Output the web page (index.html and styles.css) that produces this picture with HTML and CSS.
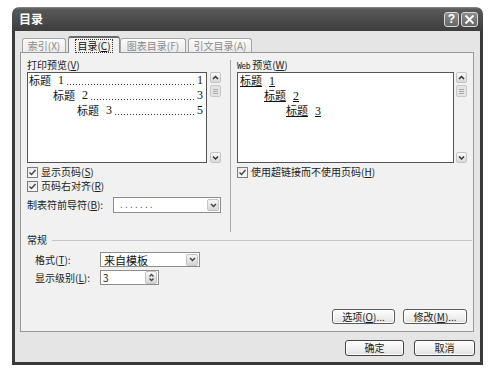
FILE: index.html
```html
<!DOCTYPE html>
<html lang="zh-CN">
<head>
<meta charset="utf-8">
<title>目录</title>
<link rel="stylesheet" href="styles.css">
</head>
<body>
<div class="win">
  <div class="titlebar">
    <span class="title">目录</span>
    <div class="tb-btns">
      <span class="tb-btn">?</span>
      <span class="tb-btn close"><svg width="11" height="11" viewBox="0 0 11 11"><path d="M1.5 1.5 L9.5 9.5 M9.5 1.5 L1.5 9.5" stroke="#fff" stroke-width="1.8" fill="none"/></svg></span>
    </div>
  </div>
  <div class="frame">
    <div class="tabs">
      <span class="tab t1">索引(X)</span>
      <span class="tab t2 sel"><span class="focus">目录(<u>C</u>)</span></span>
      <span class="tab t3">图表目录(F)</span>
      <span class="tab t4">引文目录(A)</span>
    </div>
    <div class="panel">
      <div class="top">
        <div class="col left">
          <div class="label">打印预览(<u>V</u>)</div>
          <div class="preview-wrap">
            <div class="preview">
              <div class="toc-line"><span class="h">标题</span><span class="n">1</span><span class="lead"></span><span class="pg">1</span></div>
              <div class="toc-line i1"><span class="h">标题</span><span class="n">2</span><span class="lead"></span><span class="pg">3</span></div>
              <div class="toc-line i2"><span class="h">标题</span><span class="n">3</span><span class="lead"></span><span class="pg">5</span></div>
            </div>
            <div class="vscroll">
              <span class="sbtn"><svg width="9" height="9" viewBox="0 0 9 9"><path d="M2 6 L4.5 3.5 L7 6" stroke="#333" stroke-width="1.5" fill="none"/></svg></span>
              <span class="thumb"><i></i><i></i><i></i></span>
              <span class="track"></span>
              <span class="sbtn"><svg width="9" height="9" viewBox="0 0 9 9"><path d="M2 3.5 L4.5 6 L7 3.5" stroke="#333" stroke-width="1.5" fill="none"/></svg></span>
            </div>
          </div>
          <div class="check-row first"><span class="cb"><svg width="9" height="9" viewBox="0 0 9 9"><path d="M1.5 4.5 L3.5 6.5 L7.5 2" stroke="#444" stroke-width="1.4" fill="none"/></svg></span><span>显示页码(<u>S</u>)</span></div>
          <div class="check-row"><span class="cb"><svg width="9" height="9" viewBox="0 0 9 9"><path d="M1.5 4.5 L3.5 6.5 L7.5 2" stroke="#444" stroke-width="1.4" fill="none"/></svg></span><span>页码右对齐(<u>R</u>)</span></div>
          <div class="select-row">
            <span class="sel-label">制表符前导符(<u>B</u>):</span>
            <span class="select leader-sel"><span class="sel-text dots">.......</span><span class="dd"><svg width="9" height="9" viewBox="0 0 9 9"><path d="M2 3 L4.5 5.5 L7 3" stroke="#444" stroke-width="1.5" fill="none"/></svg></span></span>
          </div>
        </div>
        <div class="sep"></div>
        <div class="col right">
          <div class="label"><span class="web">Web</span> 预览(<u>W</u>)</div>
          <div class="preview-wrap">
            <div class="preview web-preview">
              <div class="web-line"><span class="lnk">标题<span class="n">1</span></span></div>
              <div class="web-line i1"><span class="lnk">标题<span class="n">2</span></span></div>
              <div class="web-line i2b"><span class="lnk">标题<span class="n">3</span></span></div>
            </div>
            <div class="vscroll">
              <span class="sbtn"><svg width="9" height="9" viewBox="0 0 9 9"><path d="M2 6 L4.5 3.5 L7 6" stroke="#333" stroke-width="1.5" fill="none"/></svg></span>
              <span class="thumb"><i></i><i></i><i></i></span>
              <span class="track"></span>
              <span class="sbtn"><svg width="9" height="9" viewBox="0 0 9 9"><path d="M2 3.5 L4.5 6 L7 3.5" stroke="#333" stroke-width="1.5" fill="none"/></svg></span>
            </div>
          </div>
          <div class="check-row first"><span class="cb"><svg width="9" height="9" viewBox="0 0 9 9"><path d="M1.5 4.5 L3.5 6.5 L7.5 2" stroke="#444" stroke-width="1.4" fill="none"/></svg></span><span>使用超链接而不使用页码(<u>H</u>)</span></div>
        </div>
      </div>
      <div class="group-head"><span>常规</span><span class="gline"></span></div>
      <div class="form-row first">
        <span class="f-label">格式(<u>T</u>):</span>
        <span class="select fmt-sel"><span class="sel-text">来自模板</span><span class="dd"><svg width="9" height="9" viewBox="0 0 9 9"><path d="M2 3 L4.5 5.5 L7 3" stroke="#444" stroke-width="1.5" fill="none"/></svg></span></span>
      </div>
      <div class="form-row">
        <span class="f-label">显示级别(<u>L</u>):</span>
        <span class="select spin"><span class="sel-text">3</span><span class="dd"><svg width="9" height="11" viewBox="0 0 9 11"><path d="M2.5 4.5 L4.5 2.5 L6.5 4.5 M2.5 6.5 L4.5 8.5 L6.5 6.5" stroke="#444" stroke-width="1.3" fill="none"/></svg></span></span>
      </div>
      <div class="panel-btns">
        <span class="btn b-opt">选项(<u>O</u>)...</span>
        <span class="btn b-mod">修改(<u>M</u>)...</span>
      </div>
    </div>
    <div class="footer">
      <span class="btn b-ok">确定</span>
      <span class="btn b-cancel">取消</span>
    </div>
  </div>
</div>
</body>
</html>
```

FILE: styles.css
```css
* { box-sizing: border-box; }
html, body { margin: 0; padding: 0; background: #fff; }
body {
  font-family: "Noto Sans CJK SC", "Liberation Sans", sans-serif;
  font-size: 10px;
  color: #222;
  line-height: 12px;
}
u { text-decoration: underline; }

.win { width: 471px; margin: 7px 0 0 12px; }

.titlebar {
  height: 24px;
  border-radius: 7px 7px 0 0;
  background: linear-gradient(#9a9a9a 0, #6a6a6a 1px, #575757 3px, #4b4b4b 55%, #3d3d3d 100%);
  display: flex;
  align-items: center;
  padding: 0 5px 0 7px;
}
.title {
  flex: 1;
  color: #fff;
  font-weight: bold;
  font-size: 12px;
  line-height: 14px;
}
.tb-btns { display: flex; gap: 2px; }
.tb-btn {
  width: 15px;
  height: 15px;
  border: 1px solid #d8d8d8;
  border-radius: 3px;
  background: linear-gradient(#8c8c8c, #666);
  color: #fff;
  display: flex;
  align-items: center;
  justify-content: center;
  font: bold 12px/12px "Liberation Sans", sans-serif;
}
.tb-btn.close { width: 17px; }

.frame {
  height: 334px;
  background: #e5e5e5;
  border: 3px solid #3a3a3a;
  border-top: 0;
  padding: 3px 6px 0 5px;
  display: flex;
  flex-direction: column;
}

.tabs {
  height: 18px;
  display: flex;
  align-items: flex-end;
  padding-left: 2px;
}
.tab {
  height: 14px;
  border: 1px solid #a4a4a4;
  border-bottom: 0;
  border-radius: 3px 3px 0 0;
  background: linear-gradient(#fbfbfb, #ebebeb);
  color: #8c8c8c;
  display: flex;
  align-items: center;
  justify-content: center;
  font-size: 10px;
}
.t1 { width: 44px; }
.t2 { width: 52px; margin-left: 2px; }
.t3 { width: 66px; }
.t4 { width: 64px; margin-left: 2px; }
.tab.sel {
  height: 17px;
  margin-bottom: -1px;
  position: relative;
  z-index: 1;
  background: #f1f1f1;
  color: #111;
  border-color: #8a8a8a;
  border-top: 2px solid #6a6a6a;
}
.focus { outline: 1px dotted #333; outline-offset: 0; padding: 0 1px; }

.panel {
  height: 280px;
  border: 1px solid #989898;
  background: #f1f1f1;
  padding: 0 6px;
  display: flex;
  flex-direction: column;
}

.top { height: 179px; display: flex; }
.col { padding-top: 6px; }
.col.left { width: 194px; }
.col.right { width: 230px; }
.sep {
  width: 1px;
  background: #a8a8a8;
  margin: 7px 6px 0 9px;
}
.label { height: 12px; margin-bottom: 1px; white-space: nowrap; }
.web { font: 8px/12px "DejaVu Sans Mono", monospace; letter-spacing: -0.5px; }

.preview-wrap { height: 91px; display: flex; gap: 3px; }
.col.right .preview-wrap { gap: 2px; }
.preview {
  flex: 1;
  min-width: 0;
  border: 1px solid #555;
  background: #fff;
  padding: 0 3px 0 1px;
  font-family: "Liberation Serif", "Noto Sans CJK SC", serif;
  font-size: 11px;
  color: #111;
}
.toc-line {
  height: 15px;
  line-height: 15px;
  display: flex;
  white-space: nowrap;
}
.h { font-family: "Noto Sans CJK SC", sans-serif; font-size: 11px; }
.n { font-family: "Liberation Serif", serif; font-size: 12px; padding-left: 7px; }
.toc-line .lead {
  flex: 1;
  margin: 0 3px 0 3px;
  background-image: linear-gradient(to right, #444 1px, transparent 1px);
  background-size: 3px 1px;
  background-repeat: repeat-x;
  background-position: 0 11px;
}
.pg { font-family: "Liberation Serif", serif; font-size: 12px; }
.i1 { padding-left: 24px; }
.i2 { padding-left: 48px; }
.i2b { padding-left: 46px; }
.web-preview { padding-left: 2px; }
.web-line { height: 15px; line-height: 15px; white-space: nowrap; }
.lnk { text-decoration: underline; font-family: "Noto Sans CJK SC", sans-serif; font-size: 11px; }

.vscroll {
  width: 11px;
  display: flex;
  flex-direction: column;
}
.sbtn {
  width: 11px;
  height: 11px;
  border: 1px solid #c4c4c4;
  border-radius: 2px;
  background: linear-gradient(#fafafa, #d8d8d8);
  display: flex;
  align-items: center;
  justify-content: center;
}
.thumb {
  margin-top: 2px;
  height: 12px;
  border: 1px solid #c8c8c8;
  border-radius: 2px;
  background: #e4e4e4;
  display: flex;
  flex-direction: column;
  justify-content: center;
  align-items: center;
  gap: 1px;
}
.thumb i { display: block; width: 5px; height: 1px; background: #a8a8a8; }
.track { flex: 1; }

.check-row {
  height: 14px;
  display: flex;
  align-items: center;
  gap: 3px;
  white-space: nowrap;
}
.check-row.first { margin-top: 2px; }
.cb {
  width: 11px;
  height: 11px;
  border: 1px solid #7c7c7c;
  background: linear-gradient(135deg, #e6e6e6, #fff);
  display: flex;
  align-items: center;
  justify-content: center;
}

.select-row {
  margin-top: 4px;
  height: 16px;
  display: flex;
  align-items: center;
}
.sel-label { width: 86px; white-space: nowrap; }
.select {
  height: 16px;
  border: 1px solid #8e8e8e;
  background: #fff;
  display: flex;
  align-items: center;
  padding: 0 1px 0 3px;
}
.leader-sel { width: 108px; padding-left: 6px; }
.sel-text { flex: 1; white-space: nowrap; color: #222; }
.dots { letter-spacing: 2.2px; font-family: "Liberation Sans", sans-serif; color: #555; }
.dd {
  width: 12px;
  height: 12px;
  border: 1px solid #c4c4c4;
  border-radius: 2px;
  background: linear-gradient(#f6f6f6, #d6d6d6);
  display: flex;
  align-items: center;
  justify-content: center;
}

.group-head {
  margin-top: 2px;
  height: 12px;
  display: flex;
  align-items: center;
  margin-right: -5px;
}
.gline { flex: 1; height: 1px; background: #c6c6c6; margin-left: 5px; }

.form-row {
  margin-top: 3px;
  height: 15px;
  display: flex;
  align-items: center;
  padding-left: 8px;
}
.form-row.first { margin-top: 6px; }
.f-label { width: 65px; white-space: nowrap; }
.form-row .select { height: 15px; }
.fmt-sel { width: 100px; font-size: 11px; }
.fmt-sel .sel-text { color: #111; }
.spin { width: 59px; padding-left: 2px; }
.spin .dd { height: 13px; }

.panel-btns {
  margin-top: auto;
  margin-bottom: 7px;
  display: flex;
  justify-content: flex-end;
  gap: 8px;
}
.btn {
  height: 15px;
  border: 1px solid #5c5c5c;
  border-radius: 3px;
  background: linear-gradient(#fefefe, #ececec 70%, #dedede);
  box-shadow: inset 0 0 0 1px #fff;
  display: flex;
  align-items: center;
  justify-content: center;
  white-space: nowrap;
  color: #222;
}
.b-opt { width: 63px; }
.b-mod { width: 64px; }

.footer {
  padding-top: 8px;
  display: flex;
  justify-content: flex-end;
  gap: 10px;
  margin-right: -1px;
}
.footer .btn { height: 16px; border-color: #444; }
.b-ok { width: 59px; }
.b-cancel { width: 61px; }
```
